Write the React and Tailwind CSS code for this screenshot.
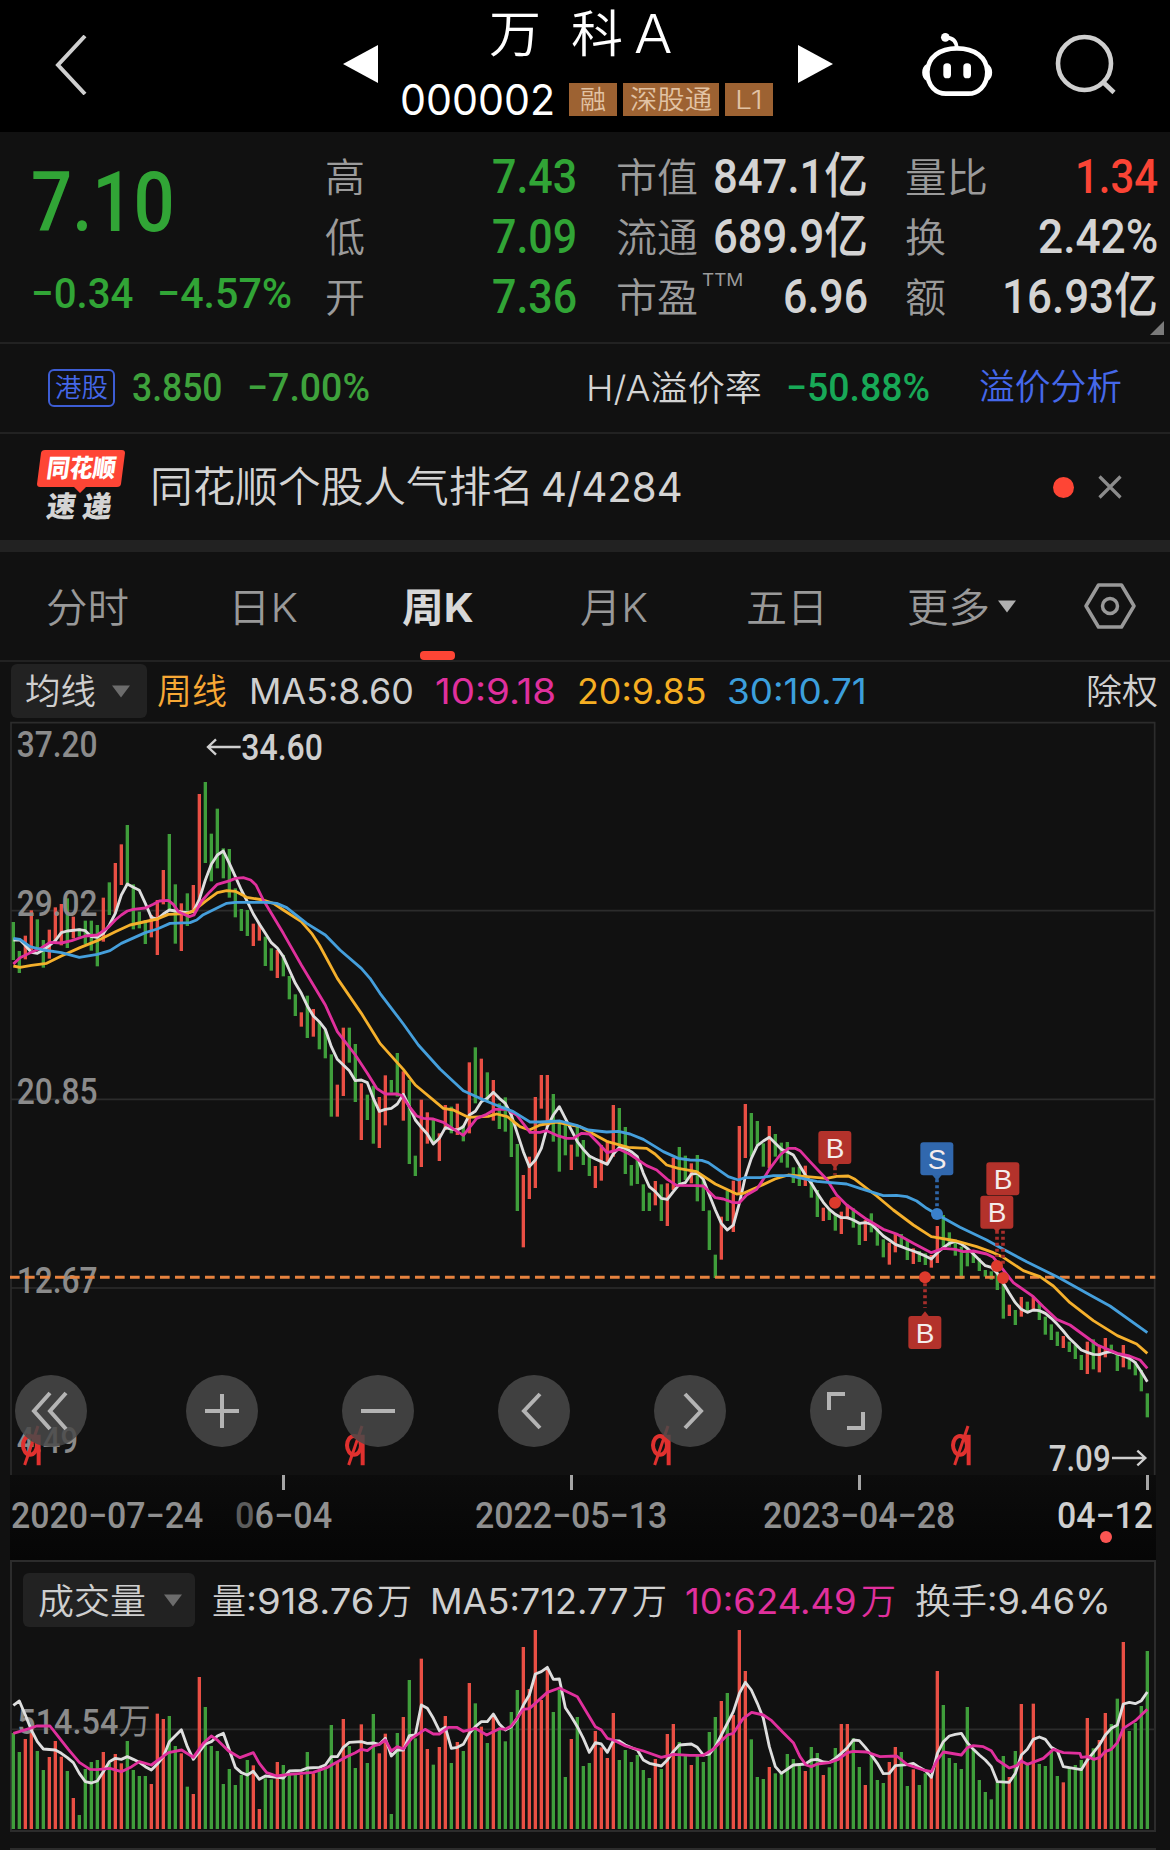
import { useLayoutEffect, useRef, useState } from "react";

/* Stretches one line of text to the width of its box. */
function Fit({ className = "", children }) {
  const box = useRef(null);
  const text = useRef(null);
  const [k, setK] = useState(1);
  useLayoutEffect(() => {
    setK(box.current.clientWidth / text.current.offsetWidth);
  }, [children]);
  return (
    <span ref={box} className={`block shrink-0 whitespace-pre leading-none ${className}`}>
      <span ref={text} className="inline-block origin-left" style={{ transform: `scaleX(${k})` }}>
        {children}
      </span>
    </span>
  );
}

const DIN = "font-['Roboto','Noto_Sans_CJK_SC',sans-serif]";
const UI = "font-['Inter','Noto_Sans_CJK_SC',sans-serif]";

/* Weekly bars, three units to the pixel: direction, high, low, volume top. */
const BARS = `g 606 720 519|g 693 759 576|r 647 718 537|r 571 690 515|g 598 690 573|g 660 743 630|r 629 716 591|r 562 672 543|r 552 676 590|g 535 684 633
r 590 655 714|g 625 650 765|g 602 672 627|g 602 692 606|g 615 739 600|r 533 665 576|g 487 585 609|r 429 580 582|r 373 495 610|g 315 495 543
g 493 628 630|g 575 625 648|g 600 672 648|r 585 652 672|r 540 705 461|r 450 553 477|g 342 570 468|g 493 671 558|r 550 693 580|g 520 618 680
r 495 580 702|r 222 545 351|g 186 429 441|g 341 484 558|g 266 445 573|g 385 475 672|g 387 533 627|g 505 592 675|g 567 633 645|g 570 648 600
r 611 678 616|r 610 662 747|g 650 738 655|g 685 752 658|r 690 774 606|g 705 769 615|g 768 838 640|g 823 888 645|r 877 920 645|g 827 954 576
r 867 950 640|g 905 988 630|g 930 1015 625|g 1003 1190 495|r 1094 1190 606|r 923 1128 477|g 923 1028 558|g 972 1146 624|r 1090 1260 493|g 1124 1200 609
g 1097 1271 462|r 1131 1284 580|r 1066 1216 521|g 1080 1118 762|g 999 1130 519|r 1054 1202 471|g 1080 1332 360|g 1307 1368 535|r 1139 1341 296|r 1177 1271 567
g 1195 1270 614|r 1240 1323 561|r 1155 1230 468|g 1160 1240 609|r 1151 1245 546|g 1215 1264 573|r 1027 1240 369|g 982 1150 430|r 1016 1135 500|g 1057 1145 549
r 1080 1202 465|g 1150 1227 510|g 1132 1235 544|g 1170 1311 456|g 1272 1473 390|r 1365 1582 261|r 1310 1437 387|r 1131 1404 210|r 1065 1166 420|r 1065 1220 325
g 1122 1265 456|g 1200 1355 390|g 1210 1306 651|r 1274 1350 537|g 1220 1310 471|g 1260 1335 618|g 1305 1368 609|r 1338 1404 513|r 1275 1382 562|r 1262 1330 594
r 1155 1310 459|g 1164 1290 600|g 1221 1362 570|g 1335 1397 606|g 1310 1392 585|g 1393 1473 630|g 1418 1473 654|r 1383 1456 597|g 1393 1503 627|r 1390 1518 522
r 1313 1410 492|g 1281 1395 546|g 1307 1380 588|r 1330 1390 615|g 1305 1444 588|g 1380 1473 606|g 1471 1590 516|g 1604 1674 471|r 1490 1619 423|g 1412 1503 399
r 1382 1536 465|r 1218 1420 210|r 1152 1314 333|g 1179 1310 538|g 1203 1275 651|g 1270 1340 657|r 1218 1345 621|g 1242 1310 640|g 1268 1328 640|g 1266 1343 582
g 1342 1389 597|g 1340 1398 615|r 1337 1398 633|g 1380 1433 561|g 1410 1491 579|r 1463 1503 645|g 1467 1500 622|g 1482 1532 564|r 1475 1542 492|r 1454 1498 492
g 1465 1523 535|g 1510 1575 621|r 1500 1563 675|g 1480 1537 588|g 1525 1577 660|g 1558 1612 669|r 1568 1634 606|r 1540 1597 561|g 1542 1580 576|g 1560 1620 678
r 1585 1632 628|g 1593 1626 675|g 1600 1635 640|r 1605 1643 645|r 1518 1629 333|g 1485 1580 435|g 1537 1580 594|g 1560 1607 609|g 1580 1677 627|g 1585 1639 441
g 1598 1629 570|g 1615 1653 660|g 1650 1670 696|g 1654 1679 718|g 1660 1710 665|g 1685 1796 588|r 1754 1788 651|g 1770 1815 573|r 1731 1790 432|g 1745 1775 610
r 1730 1770 431|g 1750 1800 612|g 1790 1844 618|g 1813 1860 570|g 1835 1878 648|r 1848 1884 667|g 1865 1896 622|g 1875 1917 615|g 1905 1950 600|r 1865 1962 474
g 1858 1948 565|r 1880 1957 540|r 1854 1912 459|g 1874 1900 492|g 1900 1953 416|r 1875 1942 246|g 1905 1948 513|g 1925 1966 489|g 1950 2014 438|g 2020 2092 273`
  .split(/[|\n]/)
  .map((row) => {
    const [dir, high, low, vol] = row.split(" ");
    return { up: dir === "r", high: +high, low: +low, vol: +vol };
  });

const shift = (dx, dy, pts) =>
  pts.split(" ").map((p) => {
    const [x, y] = p.split(",");
    return `${+x + dx},${+y + dy}`;
  });
const line = (a, b, c, bx, by, cx, cy) => [...shift(0, 0, a), ...shift(bx, by, b), ...shift(cx, cy, c)].join(" ");
const price = (a, b, c) => line(a, b, c, 1140, 540, 2280, 1020);
const volume = (a, b, c) => line(a, b, c, 1170, 0, 2310, 0);

const MA5 = price(
  "40,660 60,660 75,675 94,697 112,700 130,690 150,675 166,662 184,638 202,633 238,629 256,632 274,650 292,652 310,640 328,615 346,580 364,525 382,492 400,502 418,511 436,550 454,592 472,597 490,582 508,570 526,573 544,576 562,578 580,574 598,538 616,480 634,433 652,405 670,393 688,430 706,470 724,510 742,545 760,582 778,612 796,640 814,668 832,684 850,710 868,750 886,790 904,820 922,858 940,888 958,905 976,928 994,980 1012,1018 1030,1035 1048,1052 1066,1082 1084,1080 1102,1088 1120,1135 1138,1174",
  "16,628 34,625 52,612 70,583 88,620 106,660 124,682 142,702 160,732 178,715 196,683 214,687 232,690 250,680 268,645 286,634 304,605 322,595 340,577 358,595 376,610 394,645 412,700 430,755 448,800 466,780 484,745 502,680 520,645 538,620 556,655 574,690 592,725 610,748 628,768 646,777 664,785 682,793 700,762 718,742 736,745 754,755 772,770 790,820 808,860 826,875 844,895 862,898 880,875 898,853 916,848 934,822 952,820 970,838 988,885 1006,930 1024,970 1042,990 1060,975 1078,910 1096,830 1114,775 1132,737",
  "10,243 28,232 46,250 64,268 82,275 100,285 118,315 136,345 154,370 172,400 190,427 208,448 226,463 244,473 262,473 280,480 298,490 316,488 334,492 352,510 370,528 388,540 406,553 424,560 442,567 460,573 478,580 496,588 514,597 532,578 550,563 568,550 586,544 604,552 622,565 640,582 658,600 676,617 694,622 712,640 730,670 748,700 766,728 784,748 802,757 820,750 838,752 856,760 874,775 892,793 910,813 928,835 946,852 964,870 982,877 1000,883 1018,884 1036,878 1054,875 1072,882 1090,888 1108,895 1126,908 1144,935 1162,965",
);
const MA10 = price(
  "40,732 60,713 94,697 125,683 150,667 184,669 215,662 256,648 292,645 325,622 346,600 364,585 382,573 400,568 436,564 460,553 478,543 505,541 520,553 535,575 550,582 568,590 582,585 605,543 630,515 652,493 690,482 706,475 730,473 752,480 768,495 790,540 850,640 904,735 976,855 1012,935 1066,1005 1102,1060 1130,1105",
  "0,572 16,582 52,582 66,587 88,620 110,648 130,655 160,657 190,667 214,683 250,706 290,655 320,643 345,628 380,628 410,645 450,697 480,697 500,692 530,706 560,715 580,715 605,700 628,702 655,730 682,758 718,748 750,763 800,797 830,810 862,838 890,856 950,857 970,858 1006,893 1030,897 1060,908 1078,908 1100,885 1130,868",
  "10,358 30,325 60,285 85,265 105,265 120,272 150,305 200,358 230,405 260,435 320,478 370,508 410,522 460,550 514,578 550,565 586,568 610,575 640,573 680,582 700,592 730,630 760,668 820,710 850,740 890,778 930,795 1012,855 1072,880 1108,888 1140,900 1162,925",
);
const MA20 = price(
  "40,738 60,742 94,736 140,730 184,708 240,683 292,662 346,635 390,615 472,597 505,583 560,581 580,573 616,544 652,518 680,512 706,514 740,532 790,540 820,550 850,570 904,605 935,640 958,675 1012,775 1084,880 1138,967",
  "0,430 70,508 106,555 190,625 220,630 265,652 325,649 350,642 382,650 420,680 448,690 480,675 530,666 565,674 600,680 640,702 680,724 745,742 800,745 825,762 860,795 895,805 950,815 1006,852 1070,882 1090,880",
  "0,378 45,357 85,345 140,350 200,355 230,349 265,348 285,358 350,408 400,450 460,495 514,530 590,543 650,560 700,578 730,592 790,632 840,650 880,678 930,728 1000,782 1072,827 1130,852 1162,880",
);
const MA30 = price(
  "40,655 60,658 90,680 130,690 184,698 238,712 292,703 330,692 364,670 436,638 472,627 510,610 570,608 590,600 610,584 680,550 706,547 800,547 830,550 860,563 920,610 976,645 1020,690 1084,745 1110,775",
  "0,280 70,372 115,435 180,507 250,572 300,595 340,612 400,635 450,666 480,666 540,663 590,676 625,690 680,696 715,694 750,702 790,718 850,755 895,775 930,780 965,781 985,788 1045,830 1075,840 1095,833",
  "0,353 40,347 90,347 115,353 170,364 260,372 300,385 370,407 410,406 440,410 470,423 500,445 530,463 600,502 680,540 730,568 800,605 850,630 900,655 990,705 1050,738 1162,818",
);
const VOL5 = volume(
  "40,436 58,423 76,465 94,510 112,545 130,567 166,570 184,580 202,593 220,608 238,640 256,665 274,669 292,663 310,635 328,605 346,595 364,598 382,590 400,598 418,607 436,620 454,630 472,612 490,590 508,545 526,527 544,509 562,560 580,598 598,575 616,552 634,545 652,528 670,520 688,570 706,622 724,638 742,645 760,634 778,658 796,648 832,652 850,654 868,633 904,631 922,624 958,622 976,615 994,590 1012,590 1030,562 1048,547 1084,545 1102,550 1120,549 1138,553 1156,535",
  "4,588 22,570 40,570 58,527 76,525 94,435 112,445 130,475 148,512 166,502 184,565 202,562 220,553 238,520 256,500 274,485 292,485 310,462 328,492 346,510 364,500 382,475 400,435 418,405 436,342 454,335 472,322 490,358 508,357 526,443 544,470 562,500 580,535 598,577 616,548 634,552 652,577 670,542 688,543 706,555 724,563 742,570 760,600 778,610 814,618 832,600 850,575 868,555 904,552 922,562 940,585 958,582 976,560 994,525 1012,490 1030,455 1048,400 1066,367 1084,390 1102,430 1120,475",
  "-2,560 16,620 34,640 70,615 106,612 124,600 142,598 160,606 178,607 196,595 214,580 232,563 250,540 268,542 286,562 304,585 322,610 340,641 358,640 376,617 412,614 430,610 448,622 466,632 484,652 502,580 520,545 538,528 556,523 574,520 592,548 610,568 628,585 646,600 664,620 682,665 718,667 736,640 754,585 772,568 790,538 808,531 826,538 844,562 862,572 880,620 934,629 952,600 970,578 988,555 1006,525 1024,505 1042,495 1060,432 1078,427 1096,431 1114,422 1132,396",
);
const VOL10 = volume(
  "40,520 90,505 110,498 150,498 175,530 205,568 238,607 270,628 292,629 330,625 364,635 395,620 418,605 454,615 505,578 545,570 580,592 610,550 634,528 652,540 685,572 720,593 760,578 778,610 800,638 830,648 868,643 940,637 980,623 1040,590 1066,578 1084,568 1102,572 1120,558 1138,553 1156,540",
  "4,573 22,560 40,567 65,535 105,508 130,522 148,522 175,502 200,502 220,514 256,505 290,525 328,506 346,508 364,498 400,448 418,446 472,397 508,384 562,410 616,500 634,510 652,535 670,540 706,558 760,573 814,592 850,583 900,586 940,586 970,568 1012,525 1030,520 1060,475 1085,457 1120,465",
  "5,482 40,518 70,548 90,590 108,615 124,620 142,612 178,608 205,598 232,578 250,574 290,576 330,590 380,588 412,614 460,630 484,635 502,600 520,576 574,585 592,563 610,557 640,560 664,572 682,600 718,624 740,617 754,603 772,613 820,595 850,568 880,578 930,580 934,592 952,590 972,598 990,592 1005,575 1024,568 1042,548 1060,505 1096,482 1132,448",
);

const RED = "#e94f44";
const GREEN = "#3f9e3b";

const Lines = ({ items }) => (
  <g fill="none" strokeWidth="8.5" strokeLinejoin="round">
    {items.map(([color, pts]) => (
      <polyline key={color} points={pts} stroke={color} />
    ))}
  </g>
);

/* One trade flag: box corner, letter and colours. */
function Flag({ x, y, letter = "B", fill = "#b3322b" }) {
  return (
    <g>
      <rect x={x} y={y} width="99" height="99" rx="9" fill={fill} />
      <text x={x + 50} y={y + 80} textAnchor="middle" fontSize="84" fill="#f4ecec" fontFamily="Liberation Sans, sans-serif">
        {letter}
      </text>
    </g>
  );
}

function AxisText({ x, y, w, fill = "#8b8b8b", children }) {
  return (
    <text x={x} y={y} textLength={w} lengthAdjust="spacingAndGlyphs" fontSize="108" fontWeight="500" fill={fill} fontFamily="Roboto, sans-serif">
      {children}
    </text>
  );
}

function PriceChart() {
  return (
    <svg viewBox="0 0 3510 2265" className="block h-[755px] w-[1170px] shrink-0">
      <g fill="none" stroke="#2c2c2c" strokeWidth="5">
        <path d="M33 2265V8H3464V2265" />
        <path d="M33 572H3464M33 1138H3464M33 1704H3464" />
      </g>
      {BARS.map((b, i) => (
        <rect key={i} x={35 + 18 * i} y={b.high} width="10" height={b.low - b.high} fill={b.up ? RED : GREEN} />
      ))}
      <AxisText x={50} y={111} w={243}>37.20</AxisText>
      <AxisText x={50} y={587} w={243}>29.02</AxisText>
      <AxisText x={50} y={1153} w={243}>20.85</AxisText>
      <AxisText x={50} y={1719} w={243}>12.67</AxisText>
      <AxisText x={50} y={2198} w={184}>4.49</AxisText>
      <AxisText x={724} y={121} w={245} fill="#cfcfcf">34.60</AxisText>
      <AxisText x={3146} y={2253} w={186} fill="#cfcfcf">7.09</AxisText>
      <path d="M722 81H624M648 58L624 81L648 104M3336 2214H3436M3412 2192L3436 2214L3412 2236" fill="none" stroke="#cfcfcf" strokeWidth="7" />
      <path d="M30 1672H3466" stroke="#e8833f" strokeWidth="9" strokeDasharray="29 16" />
      <Lines items={[["#dedede", MA5], ["#f5b02c", MA20], ["#e0309d", MA10], ["#459fdc", MA30]]} />

      <g fill="none" strokeWidth="11" strokeDasharray="9 9">
        <path d="M2505 1342V1364M2775 1690V1764M2991 1532V1610M3009 1532V1640" stroke="#a82f2c" />
        <path d="M2811 1378V1470" stroke="#2f66a8" />
      </g>
      <g fill="#b3322b">
        <path d="M2492 1330H2518L2505 1346ZM2762 1790H2788L2775 1774ZM2978 1522H3004L2991 1538Z" />
      </g>
      <path d="M2797 1365H2825L2811 1382Z" fill="#2f66a8" />
      <g fill="#dd3a2c">
        <circle cx="2505" cy="1448" r="18" />
        <circle cx="2775" cy="1672" r="18" />
        <circle cx="2991" cy="1638" r="18" />
        <circle cx="3009" cy="1674" r="18" />
      </g>
      <circle cx="2811" cy="1482" r="18" fill="#3a80cc" />
      <Flag x={2455} y={1233} />
      <Flag x={2761} y={1267} letter="S" fill="#3168ae" />
      <Flag x={2959} y={1327} />
      <Flag x={2941} y={1427} />
      <Flag x={2725} y={1788} />

      {[0, -900, -1818, -2790].map((dx) => (
        <g key={dx} transform={`translate(${dx} 0)`} fill="none" stroke="#e0312f" strokeWidth="12">
          <ellipse cx="2880" cy="2176" rx="21" ry="28" />
          <path d="M2882 2150H2906V2236" />
          <path d="M2904 2118L2864 2235" strokeWidth="9" />
        </g>
      ))}
    </svg>
  );
}

function RoundButton({ d, className = "" }) {
  return (
    <div className={`flex size-[72px] shrink-0 items-center justify-center rounded-full bg-[#494949]/85 ${className}`}>
      <svg viewBox="-36 -36 72 72" className="size-[72px]" fill="none" stroke="#b4b4b4" strokeWidth="4">
        <path d={d} />
      </svg>
    </div>
  );
}

function Stat({ label, sup, labelW, value, valueW, color = "text-[#d4d4d4]" }) {
  return (
    <div className="flex h-[60px] items-center">
      <Fit className={`pt-[6px] text-[40px] font-[350] text-[#9b9b9b] ${UI} ${labelW}`}>{label}</Fit>
      {sup && <Fit className={`-mt-[30px] ml-[4px] w-[41px] text-[17px] text-[#9b9b9b] ${UI}`}>{sup}</Fit>}
      <Fit className={`ml-auto pt-[2px] text-[49px] font-medium ${DIN} ${valueW} ${color}`}>{value}</Fit>
    </div>
  );
}

const Caret = ({ className = "" }) => (
  <svg viewBox="0 0 18 12" className={`h-[13px] w-[18px] shrink-0 ${className}`} fill="currentColor">
    <path d="M0 0H18L9 12Z" />
  </svg>
);

export default function App() {
  return (
    <main className="flex h-[1850px] w-[1170px] flex-col overflow-hidden bg-[#111111]">
      <header className="flex h-[132px] shrink-0 bg-black">
        <svg viewBox="0 0 32 60" className="mt-[35px] ml-[55px] h-[60px] w-[32px] shrink-0" fill="none" stroke="#cfcfcf" strokeWidth="4">
          <path d="M30 1L3 30L30 59" />
        </svg>
        <svg viewBox="0 0 35 38" className="mt-[45px] ml-[256px] h-[38px] w-[35px] shrink-0" fill="#fff">
          <path d="M0 19L35 0V38Z" />
        </svg>
        <div className="ml-[23px] flex w-[374px] shrink-0 flex-col">
          <div className={`flex h-[66px] items-center pt-[3px] pl-[88px] text-white ${UI}`}>
            <Fit className="w-[52px] text-[50px] font-[350]">万</Fit>
            <Fit className="ml-[30px] w-[52px] text-[50px] font-[350]">科</Fit>
            <Fit className="ml-[11px] w-[38px] text-[54px] font-light">A</Fit>
          </div>
          <div className={`flex h-[68px] items-center pt-[2px] text-white ${UI}`}>
            <Fit className="-ml-[1px] w-[155px] text-[42px]">000002</Fit>
            <div className="ml-[14px] flex gap-[6px] text-[26px] font-[350] text-[#e2c3a4]">
              <span className="flex h-[33px] w-[48px] items-center justify-center bg-[#9d6232]"><Fit className="w-[26px]">融</Fit></span>
              <span className="flex h-[33px] w-[96px] items-center justify-center bg-[#9d6232]"><Fit className="w-[82px]">深股通</Fit></span>
              <span className="flex h-[33px] w-[48px] items-center justify-center bg-[#9d6232]"><Fit className="w-[28px]">L1</Fit></span>
            </div>
          </div>
        </div>
        <svg viewBox="0 0 35 38" className="mt-[45px] ml-[23px] h-[38px] w-[35px] shrink-0" fill="#fff">
          <path d="M35 19L0 0V38Z" />
        </svg>
        <svg viewBox="60 30 220 205" className="mt-[30px] ml-[87px] h-[68.33px] w-[73.33px] shrink-0" fill="none" stroke="#fff" strokeWidth="14">
          <path d="M171 85C225 85 260 112 262 155C262 200 232 221 205 221H138C110 221 82 200 82 155C84 112 118 85 171 85Z" />
          <path d="M170 85C170 65 160 54 140 52" strokeWidth="11" />
          <circle cx="136" cy="52" r="13" fill="#fff" stroke="none" />
          <rect x="130" y="130" width="23" height="45" rx="11" fill="#fff" stroke="none" />
          <rect x="190" y="130" width="23" height="45" rx="11" fill="#fff" stroke="none" />
          <path d="M80 132C62 140 62 175 80 183ZM263 132C281 140 281 175 263 183Z" fill="#fff" stroke="none" />
        </svg>
        <svg viewBox="0 0 62 62" className="mt-[34px] ml-[62px] size-[62px] shrink-0" fill="none" stroke="#cfcfcf" strokeWidth="4.6">
          <circle cx="29.5" cy="29.500" r="26.5" />
          <path d="M48.500 48.500L59 58.500" />
        </svg>
      </header>

      <section className="flex h-[210px] shrink-0 pt-[13px]">
        <div className="ml-[31px] flex w-[294px] shrink-0 flex-col text-[#31a536]">
          <Fit className={`mt-[16px] w-[144px] text-[83px] font-medium ${DIN}`}>7.10</Fit>
          <div className={`mt-[28px] flex gap-[24px] text-[43px] font-medium ${DIN}`}>
            <Fit className="w-[102px]">−0.34</Fit>
            <Fit className="w-[135px]">−4.57%</Fit>
          </div>
        </div>
        <div className="w-[252px] shrink-0">
          <Stat label="高" labelW="w-[40px]" value="7.43" valueW="w-[85px]" color="text-[#31a536]" />
          <Stat label="低" labelW="w-[40px]" value="7.09" valueW="w-[85px]" color="text-[#31a536]" />
          <Stat label="开" labelW="w-[40px]" value="7.36" valueW="w-[85px]" color="text-[#31a536]" />
        </div>
        <div className="ml-[39px] w-[252px] shrink-0">
          <Stat label="市值" labelW="w-[82px]" value="847.1亿" valueW="w-[155px]" />
          <Stat label="流通" labelW="w-[82px]" value="689.9亿" valueW="w-[155px]" />
          <Stat label="市盈" sup="TTM" labelW="w-[82px]" value="6.96" valueW="w-[85px]" />
        </div>
        <div className="ml-[37px] w-[253px] shrink-0">
          <Stat label="量比" labelW="w-[83px]" value="1.34" valueW="w-[83px]" color="text-[#fb4435]" />
          <Stat label="换" labelW="w-[41px]" value="2.42%" valueW="w-[120px]" />
          <Stat label="额" labelW="w-[41px]" value="16.93亿" valueW="w-[156px]" />
        </div>
        <svg viewBox="0 0 14 14" className="mb-[7px] -ml-[8px] size-[14px] shrink-0 self-end" fill="#7a7a7a">
          <path d="M14 0V14H0Z" />
        </svg>
      </section>

      <section className={`flex h-[92px] shrink-0 items-center border-y-2 border-[#222] ${DIN}`}>
        <div className="ml-[48px] flex h-[38px] w-[67px] items-center justify-center rounded-[6px] border-2 border-[#3d5dd4]">
          <Fit className="w-[53px] text-[26px] font-[350] text-[#4568ea]">港股</Fit>
        </div>
        <Fit className="ml-[17px] w-[91px] text-[39px] font-medium text-[#3ea23c]">3.850</Fit>
        <Fit className="ml-[24px] w-[123px] text-[39px] font-medium text-[#3ea23c]">−7.00%</Fit>
        <Fit className={`ml-[216px] w-[176px] text-[35px] font-[350] text-[#d4d4d4] ${UI}`}>H/A溢价率</Fit>
        <Fit className="ml-[24px] w-[144px] text-[39px] font-medium text-[#18a957]">−50.88%</Fit>
        <Fit className="ml-[49px] w-[143px] text-[36px] font-[350] text-[#4568ea]">溢价分析</Fit>
      </section>

      <section className={`flex h-[106px] shrink-0 items-center ${UI}`}>
        <div className="-mt-[4px] ml-[37px] flex w-[88px] shrink-0 flex-col items-start">
          <div className="relative flex h-[37px] w-[88px] items-center justify-center">
            <svg viewBox="0 0 88 44" className="absolute top-0 left-0 h-[44px] w-[88px]" fill="#fe4535">
              <path d="M8 0H85Q88 0 88 3L84 34Q83.500 37 80 37H49L43 43L37 37H3Q0 37 0 34L4 3Q4.500 0 8 0Z" />
            </svg>
            <Fit className="relative w-[69px] -skew-x-[8deg] text-[25px] font-black text-white">同花顺</Fit>
          </div>
          <div className="mt-[5px] ml-[10px] flex -skew-x-[8deg] gap-[7px] text-[29px] font-black text-[#d4d4d4]">
            <Fit className="w-[29px]">速</Fit>
            <Fit className="w-[29px]">递</Fit>
          </div>
        </div>
        <Fit className="ml-[25px] w-[384px] text-[42px] font-[350] text-[#d4d4d4]">同花顺个股人气排名</Fit>
        <Fit className="ml-[7px] w-[142px] text-[41px] text-[#d4d4d4]">4/4284</Fit>
        <span className="ml-[370px] size-[21px] shrink-0 rounded-full bg-[#fe4535]" />
        <svg viewBox="0 0 24 24" className="ml-[24px] size-[24px] shrink-0" fill="none" stroke="#8c8c8c" strokeWidth="3.2">
          <path d="M1.500 1.500L22.500 22.500M22.500 1.500L1.500 22.500" />
        </svg>
      </section>
      <div className="h-[12px] shrink-0 bg-[#222]" />

      <nav className={`flex h-[110px] shrink-0 items-center border-b-2 border-[#222] text-[40px] font-[350] text-[#999] ${UI}`}>
        <Fit className="ml-[46px] w-[83px] pt-[3px]">分时</Fit>
        <Fit className="ml-[99px] w-[70px] pt-[3px]">日K</Fit>
        <div className="relative ml-[104px] flex h-full w-[72px] shrink-0 items-center">
          <Fit className="w-[72px] pt-[3px] font-bold text-[#d8d8d8]">周K</Fit>
          <span className="absolute bottom-0 left-[18px] h-[9px] w-[35px] rounded-[4px] bg-[#fe4535]" />
        </div>
        <Fit className="ml-[106px] w-[68px] pt-[3px]">月K</Fit>
        <Fit className="ml-[98px] w-[82px] pt-[3px]">五日</Fit>
        <Fit className="ml-[79px] w-[83px] pt-[3px]">更多</Fit>
        <Caret className="ml-[8px] text-[#b0b0b0]" />
        <svg viewBox="0 0 52 46" className="ml-[68px] h-[46px] w-[52px] shrink-0" fill="none" stroke="#999" strokeWidth="3.500">
          <path d="M14.500 2H37.500L50 23L37.500 44H14.500L2 23Z" strokeLinejoin="round" />
          <circle cx="26" cy="23" r="7.500" />
        </svg>
      </nav>

      <div className={`flex h-[58px] shrink-0 items-center text-[35px] font-[350] text-[#cfcfcf] ${UI}`}>
        <div className="ml-[11px] flex h-[54px] w-[136px] shrink-0 items-center rounded-[6px] bg-[#222]">
          <Fit className="ml-[14px] w-[71px]">均线</Fit>
          <Caret className="ml-[16px] text-[#6c6c6c]" />
        </div>
        <Fit className="ml-[10px] w-[70px] text-[#f8a835]">周线</Fit>
        <Fit className="ml-[22px] w-[165px] pt-[1px] font-normal">MA5:8.60</Fit>
        <Fit className="ml-[21px] w-[121px] pt-[1px] font-normal text-[#e0309d]">10:9.18</Fit>
        <Fit className="ml-[21px] w-[130px] pt-[1px] font-normal text-[#f5ae22]">20:9.85</Fit>
        <Fit className="ml-[20px] w-[140px] pt-[1px] font-normal text-[#3c9fdc]">30:10.71</Fit>
        <Fit className="mr-[12px] ml-auto w-[72px]">除权</Fit>
      </div>

      <section className="relative shrink-0">
        <PriceChart />
        <div className="absolute top-[655px] left-[14.500px] flex">
          <RoundButton d="M-1 -18L-17 0L-1 18M15 -18L-1 0L15 18" />
          <RoundButton className="ml-[99px]" d="M-17 0H17M0 -17V17" />
          <RoundButton className="ml-[84px]" d="M-17 0H17" />
          <RoundButton className="ml-[84px]" d="M6 -17L-10 0L6 17" />
          <RoundButton className="ml-[84px]" d="M-5 -17L11 0L-5 17" />
          <RoundButton className="ml-[84px]" d="M-17 -1V-17H-1M17 1V17H1" />
        </div>
      </section>

      <section className="ml-[10px] h-[85px] w-[1146px] shrink-0 bg-linear-to-b from-[#0c0c0c] to-[#060606]">
        <div className="flex h-[15px]">
          <span className="ml-[272px] w-[3px] bg-[#a5a5a5]" />
          <span className="ml-[285px] w-[3px] bg-[#a5a5a5]" />
          <span className="ml-[285px] w-[3px] bg-[#a5a5a5]" />
          <span className="ml-[285px] w-[3px] bg-[#a5a5a5]" />
        </div>
        <div className={`mt-[8px] flex h-[36px] text-[36px] font-medium text-[#8f8f8f] ${DIN}`}>
          <Fit className="ml-[1px] w-[192px]">2020−07−24</Fit>
          <Fit className="ml-[32px] w-[97px]"><span className="text-[#5c5c5c]">0</span>6−04</Fit>
          <Fit className="ml-[143px] w-[192px]">2022−05−13</Fit>
          <Fit className="ml-[96px] w-[192px]">2023−04−28</Fit>
          <Fit className="ml-[102px] w-[96px] text-[#cfcfcf]">04−12</Fit>
        </div>
        <span className="-mt-[3px] ml-[1090px] block size-[12px] rounded-full bg-[#fb5552]" />
      </section>

      <section className="ml-[10px] flex h-[272px] w-[1146px] shrink-0 flex-col border-2 border-[#2c2c2c]">
        <div className={`flex h-[67px] shrink-0 items-center pt-[9px] text-[35px] text-[#cfcfcf] ${UI}`}>
          <div className="ml-[11px] flex h-[54px] w-[172px] shrink-0 items-center rounded-[6px] bg-[#222]">
            <Fit className="ml-[15px] w-[108px] pt-[2px] font-[350]">成交量</Fit>
            <Caret className="ml-[18px] text-[#6c6c6c]" />
          </div>
          <Fit className="ml-[17px] w-[34px] pt-[3px] font-[350]">量</Fit>
          <Fit className="w-[128px] pt-[3px]">:918.76</Fit>
          <Fit className="ml-[3px] w-[35px] pt-[3px] font-[350]">万</Fit>
          <Fit className="ml-[18px] w-[198px] pt-[3px]">MA5:712.77</Fit>
          <Fit className="ml-[4px] w-[35px] pt-[3px] font-[350]">万</Fit>
          <Fit className="ml-[18px] w-[172px] pt-[3px] text-[#e0309d]">10:624.49</Fit>
          <Fit className="ml-[4px] w-[35px] pt-[3px] font-[350] text-[#e0309d]">万</Fit>
          <Fit className="ml-[19px] w-[72px] pt-[3px] font-[350]">换手</Fit>
          <Fit className="w-[124px] pt-[3px]">:9.46%</Fit>
        </div>
        <svg viewBox="36 207 3426 603" className="block h-[201px] w-[1142px] shrink-0 overflow-visible">
          <path d="M33 508H3464" stroke="#2c2c2c" strokeWidth="5" />
          {BARS.map((b, i) => (
            <rect key={i} x={35 + 18 * i} y={b.vol} width="10" height={807 - b.vol} fill={b.up ? RED : GREEN} />
          ))}
          <text x={52} y={522} fontSize="107" fontWeight="500" fill="#8b8b8b" textLength="400" lengthAdjust="spacingAndGlyphs" fontFamily="Roboto, Noto Sans CJK SC, sans-serif">514.54<tspan fontWeight="400">万</tspan></text>
          <Lines items={[["#dedede", VOL5], ["#e0309d", VOL10]]} />
        </svg>
      </section>
      <div className="mt-[16px] ml-[10px] h-[2px] w-[1146px] shrink-0 bg-[#2c2c2c]" />
    </main>
  );
}
